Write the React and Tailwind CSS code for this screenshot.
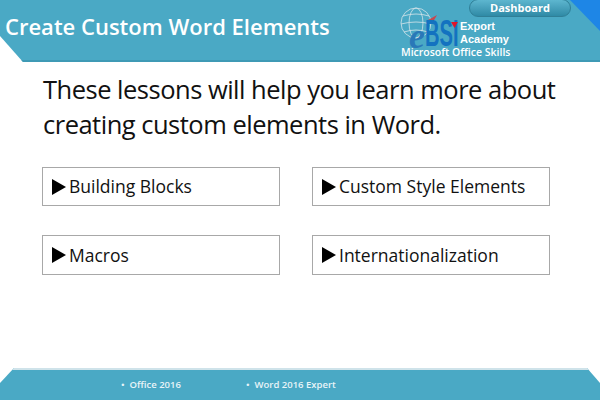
const LESSONS = ['Building Blocks', 'Custom Style Elements', 'Macros', 'Internationalization'];

function Logo() {
  return (
    <div className="relative w-[112px] h-[61px] shrink-0">
      <svg viewBox="0 0 40 32" className="absolute left-0 top-[7px] w-[40px] h-[32px]" fill="none">
        <g stroke="#d5e4ea" strokeWidth="0.8">
          <ellipse cx="16" cy="16" rx="15" ry="15" />
          <ellipse cx="16" cy="16" rx="7" ry="15" />
          <path d="M3 9 Q16 5 29 9 M1 17 Q16 13 31 17 M4 25 Q16 21 28 25" />
        </g>
        <path d="M28 13 L37 8 L33 15 Z" fill="#c6484f" />
      </svg>
      <div className="absolute left-[9px] top-[26px] h-[20px] font-['Liberation_Serif',serif] italic font-bold text-[36px] leading-[20px] text-[#2a78b8]">e</div>
      <div className="absolute left-[25px] top-[21px] h-[24px] origin-left scale-x-[0.56] font-['Liberation_Sans',sans-serif] font-bold text-[36px] leading-[26px] text-[#1372c0]">BSI</div>
      <svg viewBox="0 0 8 7" className="absolute left-[51px] top-[22px] w-[7px] h-[6px]">
        <path d="M0 0 H8 L4 7 Z" fill="#e0142a" />
      </svg>
      <div className="absolute left-[60px] top-[20px] font-['Liberation_Sans',sans-serif] font-bold text-[11px] leading-[13px] text-white">
        <p>Export</p>
        <p>Academy</p>
      </div>
      <div className="absolute left-[1px] top-[46px] whitespace-nowrap font-semibold text-[10.5px] leading-[13px] text-white">
        Microsoft Office Skills
      </div>
    </div>
  );
}

function LessonCard({ label }) {
  return (
    <div className="flex items-center h-full border border-[#a8a8a8] pl-[9px] bg-white">
      <svg viewBox="0 0 14 16" className="w-[14px] h-[16px] mr-[3px] shrink-0">
        <path d="M0 0 L14 8 L0 16 Z" fill="#000" />
      </svg>
      <span className="text-[17.5px] text-[#111]">{label}</span>
    </div>
  );
}

export default function App() {
  return (
    <div className="w-[600px] h-[400px] flex flex-col bg-white font-['Open_Sans',sans-serif] overflow-hidden">
      {/* Header */}
      <div className="relative h-[62px] shrink-0">
        <div className="h-[62px] bg-[#4aa9c5] border-b-2 border-[#3f9ab5] flex justify-between pl-[5px] pr-[88px] [clip-path:polygon(0_0,100%_0,100%_100%,23px_100%,0_36px)]">
          <h1 className="text-[22px] leading-[28px] mt-[12px] font-semibold text-white whitespace-nowrap">Create Custom Word Elements</h1>
          <Logo />
        </div>
        <div className="absolute right-0 top-0 w-[30px] h-[31px] bg-[#1e86e6] [clip-path:polygon(0_0,100%_0,100%_100%)]" />
        <div className="absolute left-[469px] top-[-1px] w-[102px] h-[18px] rounded-full border border-[#2f7f97] bg-gradient-to-b from-[#5db6cf] to-[#2f8aa6] flex items-center justify-center text-[11px] font-bold text-white">
          Dashboard
        </div>
      </div>

      {/* Intro */}
      <p className="mt-[10px] ml-[43px] text-[25.5px] leading-[35px] tracking-[-0.5px] text-[#111] whitespace-nowrap">
        These lessons will help you learn more about<br />creating custom elements in Word.
      </p>

      {/* Lessons */}
      <div className="grid grid-cols-[238px_238px] grid-rows-[39px_40px] gap-x-[32px] gap-y-[29px] ml-[42px] mt-[25px]">
        {LESSONS.map(l => <LessonCard key={l} label={l} />)}
      </div>

      {/* Footer */}
      <div className="mt-auto h-[32px] bg-[#4aa9c5] border-t-2 border-[#cfe3ea] flex items-center text-[9.5px] font-semibold text-[#e8f4f8] [clip-path:polygon(14px_0,587px_0,100%_15px,100%_100%,0_100%,0_15px)]">
        <span className="ml-[121px] w-[125px] whitespace-pre">•  Office 2016</span>
        <span className="whitespace-pre">•  Word 2016 Expert</span>
      </div>
    </div>
  );
}
